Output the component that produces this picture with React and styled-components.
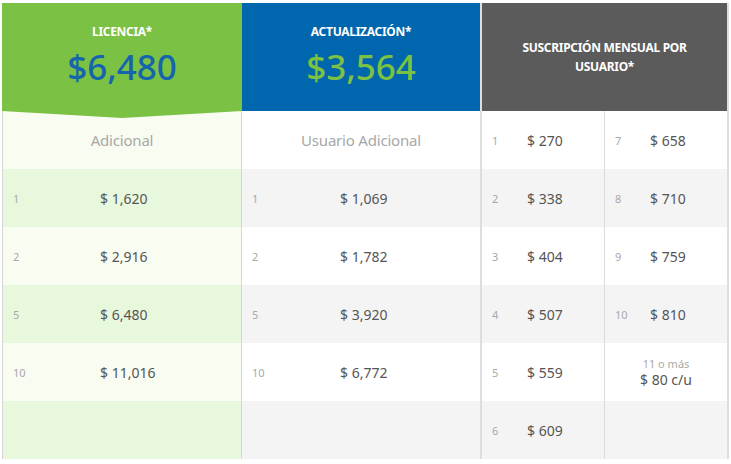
import React from "react";
import styled, { createGlobalStyle } from "styled-components";

const GlobalStyle = createGlobalStyle`
  body {
    margin: 0;
    background: #fff;
    font-family: "Noto Sans", "Open Sans", sans-serif;
  }
`;

const licencia = [
  ["1", "$ 1,620"],
  ["2", "$ 2,916"],
  ["5", "$ 6,480"],
  ["10", "$ 11,016"],
];

const actualizacion = [
  ["1", "$ 1,069"],
  ["2", "$ 1,782"],
  ["5", "$ 3,920"],
  ["10", "$ 6,772"],
];

const suscripcion = [
  [["1", "$ 270"], ["7", "$ 658"]],
  [["2", "$ 338"], ["8", "$ 710"]],
  [["3", "$ 404"], ["9", "$ 759"]],
  [["4", "$ 507"], ["10", "$ 810"]],
  [["5", "$ 559"], "extra"],
  [["6", "$ 609"], null],
];

const App = () => {
  return (
    <>
      <GlobalStyle />
      <Page>
        <Table>
          <Column $variant="licencia">
            <Header $bg="#7bc143" $arrow>
              <Title>LICENCIA*</Title>
              <BigPrice $color="#1464ae">$6,480</BigPrice>
            </Header>
            <Row $bg="#f8fcf1">
              <Caption>Adicional</Caption>
            </Row>
            {licencia.map(([n, p], i) => (
              <Row key={n} $bg={i % 2 === 0 ? "#e8f8dc" : "#f8fcf1"}>
                <Qty>{n}</Qty>
                <Price $offset="76px">{p}</Price>
              </Row>
            ))}
            <Row $bg="#e8f8dc" />
          </Column>

          <Column $variant="actualizacion">
            <Header $bg="#0066ad">
              <Title>ACTUALIZACIÓN*</Title>
              <BigPrice $color="#7bc143">$3,564</BigPrice>
            </Header>
            <Row $bg="#ffffff">
              <Caption>Usuario Adicional</Caption>
            </Row>
            {actualizacion.map(([n, p], i) => (
              <Row key={n} $bg={i % 2 === 0 ? "#f4f4f4" : "#ffffff"}>
                <Qty>{n}</Qty>
                <Price $offset="77px">{p}</Price>
              </Row>
            ))}
            <Row $bg="#f4f4f4" />
          </Column>

          <Column $variant="suscripcion">
            <Header $bg="#5b5b5b" $middle>
              <Title>SUSCRIPCIÓN MENSUAL POR<br />USUARIO*</Title>
            </Header>
            {suscripcion.map((pair, i) => (
              <SplitRow key={i} $bg={i % 2 === 0 ? "#ffffff" : "#f4f4f4"}>
                {pair.map((cell, j) => {
                  if (cell === "extra") {
                    return (
                      <Cell key={j} $divider={j === 1} $stack>
                        <Small>11 o más</Small>
                        <Price>$ 80 c/u</Price>
                      </Cell>
                    );
                  }
                  return (
                    <Cell key={j} $divider={j === 1}>
                      {cell && <Qty>{cell[0]}</Qty>}
                      {cell && <Price $offset="24px">{cell[1]}</Price>}
                    </Cell>
                  );
                })}
              </SplitRow>
            ))}
          </Column>
        </Table>
      </Page>
    </>
  );
};

const Page = styled.div`
  padding: 3px 2px 0 2px;
  width: 731px;
  box-sizing: border-box;
`;

const Table = styled.div`
  display: grid;
  grid-template-columns: 240px 238px 249px;
`;

const Column = styled.div`
  display: flex;
  flex-direction: column;
  box-sizing: border-box;
  border-left: ${(p) =>
    p.$variant === "licencia"
      ? "1px solid #d6d6d6"
      : p.$variant === "suscripcion"
      ? "2px solid #dedede"
      : "none"};
  border-right: ${(p) =>
    p.$variant === "licencia"
      ? "1px solid #d6d6d6"
      : p.$variant === "suscripcion"
      ? "2px solid #dedede"
      : "none"};
`;

const Header = styled.div`
  position: relative;
  z-index: 2;
  height: 108px;
  box-sizing: border-box;
  background: ${(p) => p.$bg};
  display: flex;
  flex-direction: column;
  align-items: center;
  justify-content: ${(p) => (p.$middle ? "center" : "flex-start")};
  padding-top: ${(p) => (p.$middle ? "0" : "19px")};
  margin-left: ${(p) => (p.$arrow ? "-1px" : "0")};
  margin-right: ${(p) => (p.$arrow ? "-1px" : "0")};
  &::after {
    content: "";
    display: ${(p) => (p.$arrow ? "block" : "none")};
    position: absolute;
    left: 0;
    right: 0;
    top: 100%;
    height: 7px;
    background: ${(p) => p.$bg};
    clip-path: polygon(0 0, 100% 0, 50% 100%);
    filter: drop-shadow(0 2px 2px rgba(0, 0, 0, 0.15));
  }
`;

const Title = styled.div`
  color: #fff;
  font-weight: 700;
  font-size: 12px;
  line-height: 19px;
  letter-spacing: -0.3px;
  text-align: center;
`;

const BigPrice = styled.div`
  color: ${(p) => p.$color};
  font-size: 35px;
  font-weight: 500;
  line-height: 40px;
  margin-top: 6px;
`;

const Row = styled.div`
  height: 58px;
  background: ${(p) => p.$bg};
  display: flex;
  align-items: center;
`;

const Caption = styled.div`
  flex: 1;
  text-align: center;
  color: #a8a8a8;
  font-size: 15px;
  letter-spacing: -0.2px;
`;

const Qty = styled.span`
  width: 11px;
  padding-left: 10px;
  color: #a8a8a8;
  font-size: 11px;
  white-space: nowrap;
`;

const Price = styled.span`
  margin-left: ${(p) => p.$offset || "0"};
  color: #555;
  font-size: 14px;
  white-space: nowrap;
`;

const SplitRow = styled.div`
  height: 58px;
  background: ${(p) => p.$bg};
  display: grid;
  grid-template-columns: 122px 1fr;
`;

const Cell = styled.div`
  display: flex;
  flex-direction: ${(p) => (p.$stack ? "column" : "row")};
  align-items: center;
  justify-content: ${(p) => (p.$stack ? "center" : "flex-start")};
  border-left: ${(p) => (p.$divider ? "1px solid #dcdcdc" : "none")};
  line-height: 17px;
`;

const Small = styled.span`
  color: #a8a8a8;
  font-size: 11px;
  line-height: 14px;
`;

export default App;
